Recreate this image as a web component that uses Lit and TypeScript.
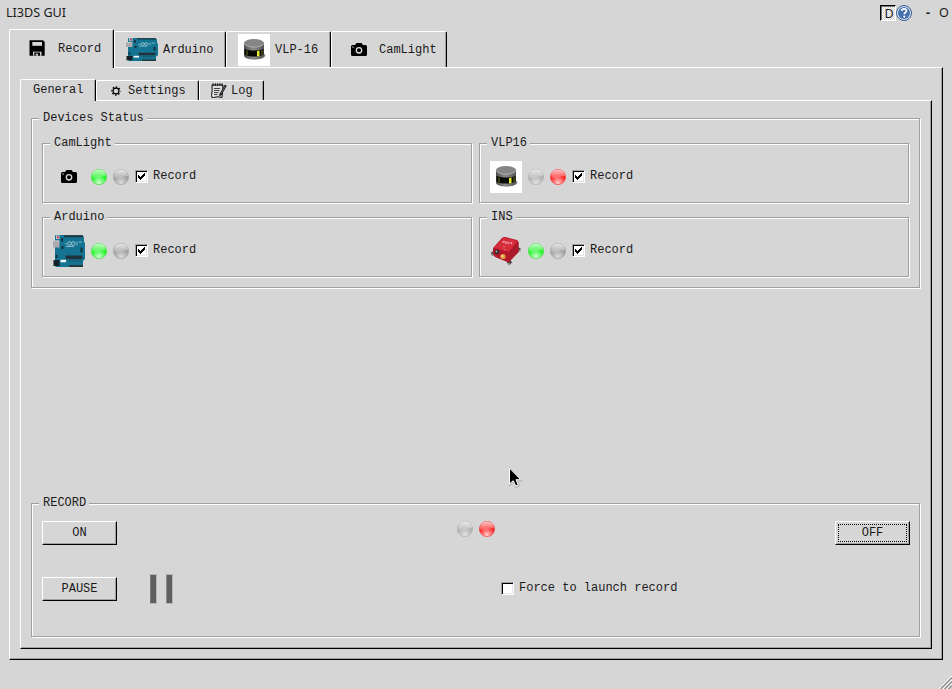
import { LitElement, html, css, svg, nothing } from "lit";
import { customElement, property } from "lit/decorators.js";

const camera = svg`<svg class="icon" width="32" height="32" viewBox="0 0 32 32">
  <path d="M9.500 11H12L13.500 9H18.500L20 11H22.500Q24 11 24 12.500V20.500Q24 22 22.500 22H9.500Q8 22 8 20.500V12.500Q8 11 9.500 11Z" fill="#000"/>
  <circle cx="16" cy="16.300" r="2.700" fill="none" stroke="#ddd" stroke-width="1.300"/>
  <rect x="9.300" y="12.500" width="1.500" height="1.200" fill="#bbb"/></svg>`;

const arduino = (h: number) => svg`<svg class="icon" width="32" height=${h} viewBox="0 0 32 32" preserveAspectRatio="none">
  <path d="M2 1Q2 0 3 0H29L31 2V7L32 8V24L30 26V32H3L2 31Z" fill="#137391"/>
  <path d="M11 1.200H30M16 31H30" stroke="#23383f" stroke-width="2"/>
  <rect x="3" y="0.500" width="3.500" height="3.500" fill="#c9c9cf"/><rect x="4" y="1.500" width="1.700" height="1.700" fill="#c3232d"/>
  <rect x="0" y="5.500" width="6.500" height="7" fill="#aaa9ad"/><path d="M0.500 6H6" stroke="#cecece"/>
  <path d="M8 4H10M8 5.500H10M9.500 11V14M28.500 12.500V17.500M3.500 20V23" stroke="#16303b" stroke-width="2"/>
  <rect x="12.500" y="20.500" width="17" height="3.500" fill="#20333d"/>
  <rect x="0.500" y="25" width="6" height="6" fill="#15222a"/>
  <path d="M7.500 26H13" stroke="#f0f4f5" stroke-width="2.500"/><path d="M16 25.500H28" stroke="#1a5d75" stroke-width="2"/>
  <circle cx="16.500" cy="8.500" r="1.800" fill="none" stroke="#a4cad6"/><circle cx="20.300" cy="8.500" r="1.800" fill="none" stroke="#a4cad6"/>
  <path d="M24 6.500V10.500M25.500 7H29M12 9H14M13 11.500H21" stroke="#86b9c9"/></svg>`;

const lidar = svg`<svg class="icon" width="32" height="32" viewBox="0 0 32 32">
  <defs><linearGradient id="m"><stop offset="0" stop-color="#4c4c4c"/><stop offset=".45" stop-color="#8c8c8c"/><stop offset="1" stop-color="#555"/></linearGradient></defs>
  <rect width="32" height="32" fill="#fff"/>
  <ellipse cx="19.500" cy="21.500" rx="7.800" ry="3.500" fill="#858585"/>
  <path d="M6 9V21.500C6 27 26 27 26 21.500V9Z" fill="url(#m)"/>
  <path d="M6.500 14.800C10 17.200 22 17.200 25.500 14.800V20.500C21 23.300 11 23.300 6.500 20.500Z" fill="#080b05"/>
  <path d="M19 17L21.500 16.500V22L19 22.500Z" fill="#e9ee32"/><path d="M24 16V21M9 16.500V21" stroke="#6d7417"/>
  <ellipse cx="16" cy="9" rx="10" ry="4" fill="#858585"/>
  <path d="M6 9.500C8 14.300 24 14.300 26 9.500" fill="none" stroke="#b5b5b5" stroke-width=".9"/></svg>`;

const ins = svg`<svg class="icon" width="32" height="32" viewBox="0 0 32 32">
  <path d="M1.500 19.500L5 17M30 15L26 13M18 29L21 26" stroke="#554648" stroke-width="3.500"/>
  <path d="M3 13L12 3Q13.500 1.500 15.500 2L27 5Q28.500 6 28.500 8L28.500 17L18.500 27.500L5 22Q3 20 3 17Z" fill="#b4182a"/>
  <path d="M4 12.500L14 2.500L27.500 6L19 17Z" fill="#d62c3c"/>
  <path d="M19 17L28.500 7V17L18.500 27.500Z" fill="#aa1a2b"/>
  <path d="M12.500 7.500Q13.500 6 15.500 7M15.500 9L17.500 6.500M18 9L19.500 7M21 9L22 7" stroke="#f5b3ba" stroke-width="1.200" fill="none"/>
  <path d="M13 11L15 12M13.500 14L15.500 15" stroke="#e8707c"/>
  <circle cx="7" cy="17" r="2.400" fill="#38292c"/><circle cx="6.500" cy="16.500" r="1" fill="#aaa"/>
  <circle cx="13" cy="21.500" r="2.600" fill="#d9a23a"/><circle cx="12.300" cy="21" r="1.100" fill="#ffe7a2"/>
  <circle cx="1.800" cy="19.500" r="1.100" fill="#aaa"/><circle cx="30" cy="15.500" r="1" fill="#999"/><circle cx="18.500" cy="29" r="1.100" fill="#aaa"/></svg>`;

const floppy = svg`<svg class="icon" width="32" height="32" viewBox="0 0 32 32">
  <path d="M8.500 7.300H22L23.700 9V22.700H8.500Z" fill="#000"/>
  <rect x="11.300" y="9" width="9.700" height="3.800" fill="#d6d6d6"/><rect x="12" y="18.700" width="8.500" height="4" fill="#d6d6d6"/>
  <rect x="13.300" y="19.500" width="5.700" height="3.200" fill="#000"/><rect x="14.700" y="20.700" width="2.300" height="2" fill="#d6d6d6"/></svg>`;

const gear = svg`<svg class="icon" width="16" height="16" viewBox="0 0 16 16">
  <circle cx="8" cy="8" r="4" fill="none" stroke="#000" stroke-width="1.500" stroke-dasharray="1.500 1.642" stroke-dashoffset=".75"/>
  <circle cx="8" cy="8" r="2.900" fill="none" stroke="#000" stroke-width="1.100"/></svg>`;

const notes = svg`<svg class="icon" width="16" height="16" viewBox="0 0 16 16">
  <path d="M1 2H12L11 14.500Q7 13 2.500 14.500Q0 15 0.500 12.500Q1.500 8 1 2Z" fill="#ddd" stroke="#111"/>
  <path d="M2 .3V3M4.300 .3V3M6.600 .3V3M8.900 .3V3M11 .3V3" stroke="#111"/>
  <path d="M3 5.500H9M3 7.500H8.500M3 9.500H7.500M3 11.500H6.500" stroke="#333" stroke-width=".9"/>
  <path d="M14.800 2.300L9.500 11.500" stroke="#111" stroke-width="2.300"/><path d="M14 3.500L10 10.500" stroke="#aaa" stroke-width=".6"/><path d="M8.300 13.500L8.500 10.500L10.700 11.800Z" fill="#111"/></svg>`;

const base = css`
  .icon { display: block; flex: none; }
`;

@customElement("status-led")
class StatusLed extends LitElement {
  @property() color = "gray";
  static styles = css`
    :host { display: block; flex: none; width: 16px; height: 16px; }
    svg { display: block; }
  `;
  render() {
    const [edge, mid, light] = ({
      green: ["#3fe043", "#27f52d", "#d4ffd5"],
      red: ["#f04040", "#ff2c2c", "#ffd0d0"],
      gray: ["#a2a2a2", "#a3a3a3", "#dcdcdc"],
      pale: ["#b2b2b2", "#b2b2b2", "#e2e2e2"],
    } as Record<string, string[]>)[this.color];
    return html`<svg width="16" height="16" viewBox="0 0 16 16">
      <defs>
        <radialGradient id="b" cx=".5" cy=".88" r=".5"><stop offset="0" stop-color=${light}/><stop offset="1" stop-color=${mid}/></radialGradient>
        <linearGradient id="t" x2="0" y2="1"><stop offset="0" stop-color="#fff" stop-opacity=".75"/><stop offset="1" stop-color="#fff" stop-opacity=".15"/></linearGradient>
      </defs>
      <circle cx="8" cy="8" r="7.600" fill="url(#b)" stroke=${edge} stroke-width=".7"/>
      <path d="M1 7A7 6.600 0 0 1 15 7Q11 7.200 8 8.500Q4 9.500 1.200 8.500Z" fill="url(#t)"/>
    </svg>`;
  }
}

@customElement("check-field")
class CheckField extends LitElement {
  @property() label = "";
  @property({ type: Boolean }) checked = false;
  static styles = css`
    :host { display: flex; gap: 5px; height: 14px; line-height: 14px; white-space: pre; }
    .box {
      width: 13px; height: 13px; box-sizing: border-box; margin-top: 1px; background: #fff;
      border: 1px solid; border-color: #a0a0a0 #fff #fff #a0a0a0;
      box-shadow: inset 1px 1px #000, inset -1px -1px #e6e6e6;
    }
    svg { display: block; }
  `;
  render() {
    return html`<span class="box">${this.checked
      ? html`<svg width="11" height="11" viewBox="0 0 11 11" shape-rendering="crispEdges"><path d="M2 4h1v1h1v1h1v-1h1v-1h1v-1h1v-1h1v3h-1v1h-1v1h-1v1h-1v1h-1v-1h-1v-1h-1z" fill="#000"/></svg>`
      : nothing}</span><span>${this.label}</span>`;
  }
}

@customElement("group-box")
class GroupBox extends LitElement {
  @property() label = "";
  static styles = css`
    :host {
      display: block; position: relative; box-sizing: border-box;
      border: 1px solid #a0a0a0; box-shadow: 1px 1px #fff, inset 1px 1px #fff;
    }
    .legend {
      position: absolute; left: 7px; top: -8px; padding: 0 3px 0 4px;
      line-height: 14px; background: #d6d6d6; white-space: pre;
    }
  `;
  render() {
    return html`<span class="legend">${this.label}</span><slot></slot>`;
  }
}

const devices = [
  { name: "CamLight", icon: camera, leds: ["green", "gray"] },
  { name: "VLP16", icon: lidar, leds: ["pale", "red"] },
  { name: "Arduino", icon: arduino(32), leds: ["green", "gray"] },
  { name: "INS", icon: ins, leds: ["green", "gray"] },
];

@customElement("app-root")
class AppRoot extends LitElement {
  static styles = [base, css`
    :host {
      display: flex; flex-direction: column; position: relative; box-sizing: border-box;
      width: 952px; height: 689px; overflow: hidden; background: #d6d6d6; color: #1a1a1a;
      font: 12px "Liberation Mono", monospace;
    }
    .title {
      display: flex; height: 29px; flex: none; box-sizing: border-box; padding: 4px 3px 0 6px;
      font: 12.600px/17px "Noto Sans", "Open Sans", sans-serif;
    }
    .title .name { flex: 1; }
    .dbtn {
      width: 16px; height: 16px; box-sizing: border-box; margin-top: 1px; padding-left: 2px; text-align: center; line-height: 15px;
      border: 1px solid; border-color: #000 #fff #fff #000; box-shadow: inset 1px 1px #777;
      background: repeating-conic-gradient(#fff 0 25%, #d6d6d6 0 50%) 0 0 / 2px 2px;
    }
    .help { margin-top: 1px; }
    .min { margin-left: 14px; width: 5px; font-weight: 700; }
    .max { margin-left: 8px; width: 10px; }
    .tabs { display: flex; align-items: flex-end; flex: none; }
    .tabs.outer { height: 38px; margin-left: 9px; }
    .tabs.inner { height: 21px; }
    .tab {
      display: flex; align-items: center; gap: 4px; box-sizing: border-box; padding-left: 11px;
      height: 36px; line-height: 14px; white-space: pre; background: #d6d6d6;
      border: 1px solid; border-color: #fff #000 transparent #fff; border-bottom: 0;
      border-radius: 2px 2px 0 0; box-shadow: inset -1px 0 #a0a0a0;
    }
    .tab.wide { gap: 5px; }
    .tab.active { height: 39px; margin-bottom: -1px; position: relative; }
    .inner .tab { height: 20px; }
    .inner .tab.active { height: 22px; padding-left: 12px; padding-bottom: 1px; }
    .w105 { width: 105px; } .w112 { width: 112px; } .w116 { width: 116px; }
    .w76 { width: 76px; } .w103 { width: 103px; } .w65 { width: 65px; }
    .pane {
      display: flex; flex-direction: column; box-sizing: border-box; flex: 1;
      border: 1px solid; border-color: #fff #000 #000 #fff; box-shadow: inset -1px -1px #a0a0a0;
    }
    .pane.outer { margin: 0 9px 29px 9px; padding: 11px 10px 10px; }
    .pane.inner { padding: 17px 11px 11px 10px; justify-content: space-between; }
    .devices { height: 170px; padding: 24px 10px 0; }
    .grid { display: grid; grid-template-columns: 430px 430px; gap: 14px 7px; }
    .device { height: 60px; padding: 17px 10px 0; }
    .row { display: flex; align-items: center; gap: 6px; }
    .row check-field { margin-top: -2px; }
    .record { height: 134px; padding: 17px 9px 0 10px; }
    .line { display: flex; align-items: flex-start; height: 56px; }
    .leds { display: flex; gap: 6px; margin: 0 auto 0 340px; }
    button {
      width: 75px; height: 24px; box-sizing: border-box; padding: 0 0 1px; background: #d6d6d6; color: inherit;
      font: inherit; line-height: 14px; border: 1px solid; border-color: #fff #000 #000 #fff; border-radius: 0;
      box-shadow: inset -1px -1px #a0a0a0;
    }
    button.focus { display: grid; padding: 2px; }
    .ring { display: grid; place-items: center; border: 1px dotted #000; line-height: 14px; padding-bottom: 1px; }
    .bars { margin: -3px 0 0 33px; display: block; }
    .force { margin: 4px 0 0 328px; }
    .cursor { position: absolute; left: 508px; top: 467px; }
    .grip { position: absolute; right: 0; bottom: 0; }
  `];

  render() {
    return html`
      <div class="title">
        <span class="name">LI3DS GUI</span>
        <span class="dbtn">D</span>
        <svg class="help" width="16" height="16" viewBox="0 0 16 16">
          <circle cx="8" cy="8" r="7.500" fill="#dce5f1" stroke="#34598f"/>
          <circle cx="8" cy="8" r="6" fill="#4470ad"/>
          <path d="M5.800 6Q5.800 3.800 8.100 3.800Q10.500 3.800 10.500 5.700Q10.500 6.700 9.300 7.500Q8.300 8.100 8.300 9.300" fill="none" stroke="#fff" stroke-width="1.700"/>
          <circle cx="8.300" cy="11.600" r="1.100" fill="#fff"/>
        </svg>
        <span class="min">-</span><span class="max">O</span>
      </div>
      <nav class="tabs outer">
        <div class="tab active wide w105">${floppy}Record</div>
        <div class="tab wide w112">${arduino(23)}Arduino</div>
        <div class="tab wide w105">${lidar}VLP-16</div>
        <div class="tab w116">${camera}CamLight</div>
      </nav>
      <main class="pane outer">
        <nav class="tabs inner">
          <div class="tab active w76">General</div>
          <div class="tab w103">${gear}Settings</div>
          <div class="tab w65">${notes}Log</div>
        </nav>
        <section class="pane inner">
          <group-box class="devices" label="Devices Status">
            <div class="grid">
              ${devices.map((d) => html`<group-box class="device" label=${d.name}>
                <div class="row">
                  ${d.icon}
                  ${d.leds.map((c) => html`<status-led color=${c}></status-led>`)}
                  <check-field checked label="Record"></check-field>
                </div>
              </group-box>`)}
            </div>
          </group-box>
          <group-box class="record" label="RECORD">
            <div class="line">
              <button>ON</button>
              <div class="leds"><status-led color="pale"></status-led><status-led color="red"></status-led></div>
              <button class="focus"><span class="ring">OFF</span></button>
            </div>
            <div class="line">
              <button>PAUSE</button>
              <svg class="bars" width="23" height="30" viewBox="0 0 23 30">
                <path d="M0 0H7V30H0ZM16 0H23V30H16Z" fill="#b5b5b5"/>
                <path d="M.3 1H6V29H.3ZM16.500 1H22V29H16.500Z" fill="#606060"/>
              </svg>
              <check-field class="force" label="Force to launch record"></check-field>
            </div>
          </group-box>
        </section>
      </main>
      <svg class="cursor" width="16" height="22" viewBox="0 0 16 22">
        <path d="M2 2V17.500L5.500 14.500L8 20L11 18.500L8.800 13.500H13Z" fill="none" stroke="#999" stroke-width="2" opacity=".5"/>
        <path d="M1.500 1V17L5.300 13.700L7.700 19L10.300 18L8 12.700H12.800Z" fill="#000" stroke="#fff"/>
      </svg>
      <svg class="grip" width="13" height="13" viewBox="0 0 13 13">
        <path d="M0 13L13 0M4 13L13 4M8 13L13 8" stroke="#fff" stroke-width="1.200"/>
        <path d="M1.500 13L13 1.500M5.500 13L13 5.500M9.500 13L13 9.500" stroke="#909090" stroke-width="1.500"/>
      </svg>`;
  }
}
